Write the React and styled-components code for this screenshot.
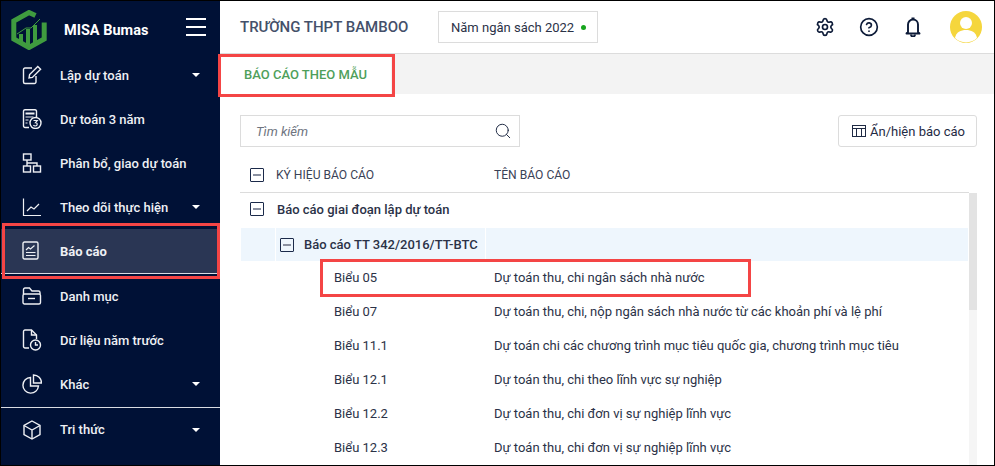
import styled, { createGlobalStyle } from "styled-components";
import { Settings, CircleHelp, Search } from "lucide-react";

const Global = createGlobalStyle`
  html, body { margin: 0; padding: 0; background: #fff; }
  * { box-sizing: border-box; }
`;

//sidebar icons, drawn by hand to follow the picture
const line = { fill: "none", stroke: "currentColor", strokeWidth: 1.4 };

const PenIcon = () => (
  <svg width="20" height="20" viewBox="0 0 20 20" {...line}>
    <path d="M10 3H3a1.5 1.5 0 0 0-1.5 1.5V17A1.5 1.5 0 0 0 3 18.5h9.5A1.5 1.5 0 0 0 14 17v-6" />
    <path d="M7 13l.6-3.4L15.8 1.500l2.8 2.8-8.200 8.100z" />
  </svg>
);
const BudgetIcon = () => (
  <svg width="20" height="20" viewBox="0 0 20 20" {...line}>
    <path d="M7 18.5H3A1.5 1.5 0 0 1 1.5 17V2A1.5 1.5 0 0 1 3 .8h10A1.5 1.5 0 0 1 14.5 2v6" />
    <path d="M3.5 4.5h9" strokeWidth="2" />
    <path d="M3.5 8h8M3.5 11h3M3.5 14h2" strokeWidth="1" />
    <circle cx="13.5" cy="14" r="5.5" fill="#001136" />
    <path d="M11.5 11.5h3.8l-1.800 2.200c2.300 0 2.300 3.300-.2 3.300-.9 0-1.500-.3-1.800-1" strokeWidth="1.2" />
  </svg>
);
const TreeIcon = () => (
  <svg width="20" height="20" viewBox="0 0 20 20" {...line}>
    <rect x="1.5" y="1" width="7.5" height="6" />
    <rect x="1.5" y="13" width="7" height="6" />
    <rect x="11.5" y="13" width="7" height="6" />
    <path d="M5 7v3h10v3M5 10v3" />
  </svg>
);
const TrendIcon = () => (
  <svg width="20" height="20" viewBox="0 0 20 20" {...line}>
    <path d="M1.5 1.5v17H19" strokeWidth="1.2" />
    <path d="M5 14l4-4 3 2 5-5" strokeWidth="1.2" />
  </svg>
);
const ReportIcon = () => (
  <svg width="18" height="20" viewBox="0 0 18 20" {...line}>
    <rect x="1" y="1" width="15" height="17" rx="1.5" />
    <path d="M4 9l2.5-2.5 2 1.500L12.500 4.500" strokeWidth="1.2" />
    <path d="M4 11.5h9.5M4 14.5h9.5" strokeWidth="1.2" />
  </svg>
);
const FolderIcon = () => (
  <svg width="20" height="18" viewBox="0 0 20 18" {...line}>
    <path d="M1.5 7V2.5A1.5 1.5 0 0 1 3 1h4.5l2.5 3h6.5A1.5 1.5 0 0 1 18 5.5V7" />
    <rect x="1" y="7" width="17.5" height="10" rx="1.5" />
    <path d="M6 11.5h7" />
  </svg>
);
const HistoryIcon = () => (
  <svg width="20" height="22" viewBox="0 0 20 22" {...line}>
    <path d="M7 19H3a1.5 1.5 0 0 1-1.500-1.500v-15A1.500 1.500 0 0 1 3 1h6.500l5 5v4" />
    <path d="M9.5 1v5h5" />
    <circle cx="13.5" cy="16" r="5" />
    <path d="M13.5 13v3h2.5" />
  </svg>
);
const PieIcon = () => (
  <svg width="20" height="20" viewBox="0 0 20 20" {...line}>
    <path d="M8.5 3.5a7.8 7.8 0 1 0 8 8.500h-8z" />
    <path d="M11.5 1v8h8a8 8 0 0 0-8-8z" />
  </svg>
);
const CubeIcon = () => (
  <svg width="20" height="20" viewBox="0 0 20 20" {...line}>
    <path d="M10 1l8 4.5v9L10 19l-8-4.500v-9z" />
    <path d="M2 5.5l8 4.5 8-4.500M10 10v9" />
  </svg>
);
const Logo = () => (
  <svg width="36" height="40" viewBox="0 0 36 40" fill="none">
    <path d="M24.5 5.5L18 2.5 2.8 11v18L18 37.5 33.2 29V12.5" stroke="#3f9b3f" strokeWidth="5" />
    <path d="M10 32v-8M17 35V19M24 33V15" stroke="#3f9b3f" strokeWidth="4" />
    <path d="M6 24l9-6 5 0 9-9" stroke="#3f9b3f" strokeWidth="1" />
  </svg>
);
const BellIcon = () => (
  <svg width="20" height="20" viewBox="0 0 20 20" fill="none" stroke="currentColor" strokeWidth="1.9">
    <path d="M5 15V7.5a5 5 0 0 1 10 0V15l1.5 1.5h-13z" strokeLinejoin="round" />
    <path d="M8.5 1.5h3M8 17.5a2 2 0 0 0 4 0" />
  </svg>
);

const Page = styled.div`
  position: relative;
  width: 995px;
  height: 466px;
  border: 1px solid #000;
  display: flex;
  overflow: hidden;
  font-family: Roboto, "Liberation Sans", sans-serif;
  color: #1f2a44;
`;
const Sidebar = styled.aside`
  width: 219px;
  flex: none;
  background: #001136;
  color: #fff;
  display: flex;
  flex-direction: column;
`;
const Brand = styled.div`
  height: 52px;
  padding: 6px 0 0 10px;
  display: flex;
  align-items: center;
  font-size: 14.5px;
  font-weight: 700;
  color: #fff;
`;
const BrandName = styled.span`
  margin-left: 17px;
  width: 122px;
`;
const Burger = styled.span`
  display: block;
  width: 20px;
  height: 18px;
  margin-top: -6px;
  border-top: 2px solid #fff;
  border-bottom: 2px solid #fff;
  position: relative;
  &::after {
    content: "";
    position: absolute;
    left: 0;
    right: 0;
    top: 6px;
    height: 2px;
    background: #fff;
  }
`;
const Nav = styled.nav`
  display: flex;
  flex-direction: column;
`;
const NavRow = styled.div`
  height: ${(p) => (p.$active ? "45px" : "44px")};
  margin-top: ${(p) => (p.$rule ? "1px" : "0")};
  display: flex;
  align-items: center;
  padding-left: 21px;
  font-size: 13px;
  font-weight: ${(p) => (p.$active ? 700 : 500)};
  color: #eef0f4;
  background: ${(p) => (p.$active ? "#2a3654" : "transparent")};
  border-top: ${(p) => (p.$rule ? "1px solid #d9dce3" : "none")};
  border-bottom: ${(p) => (p.$active ? "1px solid #d9dce3" : "none")};
`;
const NavIcon = styled.span`
  width: 38px;
  flex: none;
  display: flex;
  align-items: center;
`;
const NavLabel = styled.span`
  flex: 1;
`;
const Caret = styled.span`
  width: 0;
  height: 0;
  margin-right: 20px;
  border-left: 4.5px solid transparent;
  border-right: 4.5px solid transparent;
  border-top: 4.5px solid #fff;
`;
const Main = styled.main`
  flex: 1;
  min-width: 0;
  display: flex;
  flex-direction: column;
`;
const TopBar = styled.header`
  height: 53px;
  flex: none;
  border-bottom: 1px solid #dcdcdc;
  display: flex;
  align-items: center;
  padding-left: 20px;
`;
const School = styled.div`
  font-size: 15px;
  font-weight: 500;
  color: #44506a;
  width: 198px;
`;
const YearChip = styled.div`
  width: 160px;
  height: 32px;
  border: 1px solid #dcdcdc;
  display: flex;
  align-items: center;
  padding-left: 12px;
  font-size: 13px;
  color: #2b3247;
`;
const Dot = styled.span`
  width: 5px;
  height: 5px;
  border-radius: 50%;
  background: #17a51d;
  margin-left: 7px;
`;
const TopIcons = styled.div`
  margin-left: auto;
  display: flex;
  align-items: center;
  gap: 24px;
  padding-right: 12px;
  color: #0d1b38;
`;
const Avatar = styled.span`
  display: block;
  width: 32px;
  height: 32px;
  margin-left: 3px;
`;
const TabStrip = styled.div`
  height: 40px;
  flex: none;
  background: #f3f3f3;
  display: flex;
`;
const Tab = styled.div`
  width: 171px;
  background: #fff;
  display: flex;
  align-items: center;
  padding-left: 24px;
  font-size: 13px;
  font-weight: 500;
  color: #4f9f5b;
`;
const Tools = styled.div`
  height: 60px;
  flex: none;
  padding: 21px 17px 0 20px;
  display: flex;
  justify-content: space-between;
`;
const SearchBox = styled.div`
  width: 280px;
  height: 32px;
  border: 1px solid #dcdcdc;
  display: flex;
  align-items: center;
  justify-content: space-between;
  padding: 0 7px 0 15px;
  font-size: 13px;
  font-style: italic;
  color: #6e7480;
`;
const ToggleButton = styled.div`
  width: 139px;
  height: 32px;
  border: 1px solid #dcdcdc;
  border-radius: 3px;
  display: flex;
  align-items: center;
  gap: 3px;
  padding-left: 12px;
  font-size: 13px;
  color: #1f2a44;
`;
const Table = styled.div`
  padding-left: 20px;
`;
const HeadRow = styled.div`
  height: 39px;
  padding-top: 3px;
  display: flex;
  align-items: center;
  width: 729px;
  border-bottom: 1px solid #dcdcdc;
  font-size: 12.1px;
  color: #3a4256;
`;
const BodyWrap = styled.div`
  display: flex;
`;
const Rows = styled.div`
  width: 728px;
`;
const Row = styled.div`
  height: ${(p) => p.$h || 34}px;
  padding-bottom: ${(p) => p.$pb || 0}px;
  display: flex;
  align-items: center;
  font-size: 13px;
  color: #2b3247;
  font-weight: ${(p) => (p.$bold ? 500 : 400)};
`;
const CodeCell = styled.div`
  width: ${(p) => p.$w}px;
  flex: none;
  height: 100%;
  display: flex;
  align-items: center;
  padding-left: ${(p) => p.$indent || 0}px;
  margin-right: ${(p) => (p.$tint ? 1 : 0)}px;
  background: ${(p) => (p.$tint ? "#eef6fd" : "transparent")};
  white-space: nowrap;
`;
const TintLead = styled.div`
  width: 34px;
  height: 100%;
  margin: 0 1px;
  background: #eef6fd;
`;
const TintFill = styled.div`
  flex: 1;
  height: 100%;
  background: #eef6fd;
`;
const Collapse = styled.span`
  width: 14px;
  height: 14px;
  flex: none;
  margin-right: ${(p) => p.$gap || 13}px;
  margin-left: ${(p) => p.$left || 10}px;
  border: 1px solid #1b2a4a;
  border-radius: 1px;
  display: flex;
  align-items: center;
  justify-content: center;
  &::after {
    content: "";
    width: 8px;
    height: 2px;
    background: #8a90a0;
  }
`;
const ScrollBar = styled.div`
  width: 8px;
  flex: none;
  height: 273px;
  background: #f5f5f5;
  margin-left: 1px;
  &::before {
    content: "";
    display: block;
    height: 117px;
    background: #e3e3e3;
  }
`;
const RedBox = styled.div`
  position: absolute;
  left: ${(p) => p.$x}px;
  top: ${(p) => p.$y}px;
  width: ${(p) => p.$w}px;
  height: ${(p) => p.$h}px;
  border: 3px solid #f44545;
  pointer-events: none;
`;

const menu = [
  { label: "Lập dự toán", icon: <PenIcon />, caret: true },
  { label: "Dự toán 3 năm", icon: <BudgetIcon /> },
  { label: "Phân bổ, giao dự toán", icon: <TreeIcon /> },
  { label: "Theo dõi thực hiện", icon: <TrendIcon />, caret: true },
  { label: "Báo cáo", icon: <ReportIcon />, active: true },
  { label: "Danh mục", icon: <FolderIcon /> },
  { label: "Dữ liệu năm trước", icon: <HistoryIcon /> },
  { label: "Khác", icon: <PieIcon />, caret: true },
  { label: "Tri thức", icon: <CubeIcon />, caret: true, rule: true },
];

const reports = [
  ["Biểu 05", "Dự toán thu, chi ngân sách nhà nước"],
  ["Biểu 07", "Dự toán thu, chi, nộp ngân sách nhà nước từ các khoản phí và lệ phí"],
  ["Biểu 11.1", "Dự toán chi các chương trình mục tiêu quốc gia, chương trình mục tiêu"],
  ["Biểu 12.1", "Dự toán thu, chi theo lĩnh vực sự nghiệp"],
  ["Biểu 12.2", "Dự toán thu, chi đơn vị sự nghiệp lĩnh vực"],
  ["Biểu 12.3", "Dự toán thu, chi đơn vị sự nghiệp lĩnh vực"],
];

const App = () => {
  return (
    <Page>
      <Global />
      <Sidebar>
        <Brand>
          <Logo />
          <BrandName>MISA Bumas</BrandName>
          <Burger />
        </Brand>
        <Nav>
          {menu.map((item) => (
            <NavRow key={item.label} $active={item.active} $rule={item.rule}>
              <NavIcon>{item.icon}</NavIcon>
              <NavLabel>{item.label}</NavLabel>
              {item.caret && <Caret />}
            </NavRow>
          ))}
        </Nav>
      </Sidebar>
      <Main>
        <TopBar>
          <School>TRƯỜNG THPT BAMBOO</School>
          <YearChip>
            Năm ngân sách 2022
            <Dot />
          </YearChip>
          <TopIcons>
            <Settings size={20} strokeWidth={2} />
            <CircleHelp size={20} strokeWidth={2} />
            <BellIcon />
            <Avatar>
              <svg width="32" height="32" viewBox="0 0 32 32">
                <circle cx="16" cy="16" r="16" fill="#f5d63d" />
                <circle cx="16" cy="12" r="6" fill="#fff" />
                <path d="M5 27c1-6 6-8 11-8s10 2 11 8a16 16 0 0 1-22 0z" fill="#fff" />
              </svg>
            </Avatar>
          </TopIcons>
        </TopBar>
        <TabStrip>
          <Tab>BÁO CÁO THEO MẪU</Tab>
        </TabStrip>
        <Tools>
          <SearchBox>
            Tìm kiếm
            <Search size={18} strokeWidth={1.3} color="#1f2a44" />
          </SearchBox>
          <ToggleButton>
            <svg width="16" height="16" viewBox="0 0 16 16" fill="none" stroke="#1f2a44" strokeWidth="1">
              <rect x="1.5" y="2.5" width="13" height="11" />
              <path d="M1.5 5.5h13M5.5 5.5v8M10.5 5.5v8" />
            </svg>
            Ẩn/hiện báo cáo
          </ToggleButton>
        </Tools>
        <Table>
          <HeadRow>
            <Collapse $gap={12} />
            <CodeCell $w={218}>KÝ HIỆU BÁO CÁO</CodeCell>
            TÊN BÁO CÁO
          </HeadRow>
          <BodyWrap>
            <Rows>
              <Row $h={35} $pb={3} $bold>
                <Collapse />
                Báo cáo giai đoạn lập dự toán
              </Row>
              <Row $h={33} $bold>
                <TintLead />
                <CodeCell $w={209} $tint>
                  <Collapse $left={4} $gap={10} />
                  Báo cáo TT 342/2016/TT-BTC
                </CodeCell>
                <TintFill />
              </Row>
              {reports.map(([code, name], i) => (
                <Row key={i} $pb={1}>
                  <CodeCell $w={254} $indent={94}>{code}</CodeCell>
                  {name}
                </Row>
              ))}
            </Rows>
            <ScrollBar />
          </BodyWrap>
        </Table>
      </Main>
      <RedBox $x={1} $y={222} $w={218} $h={56} />
      <RedBox $x={217} $y={53} $w={177} $h={43} />
      <RedBox $x={319} $y={258} $w={431} $h={38} />
    </Page>
  );
};

export default App;
